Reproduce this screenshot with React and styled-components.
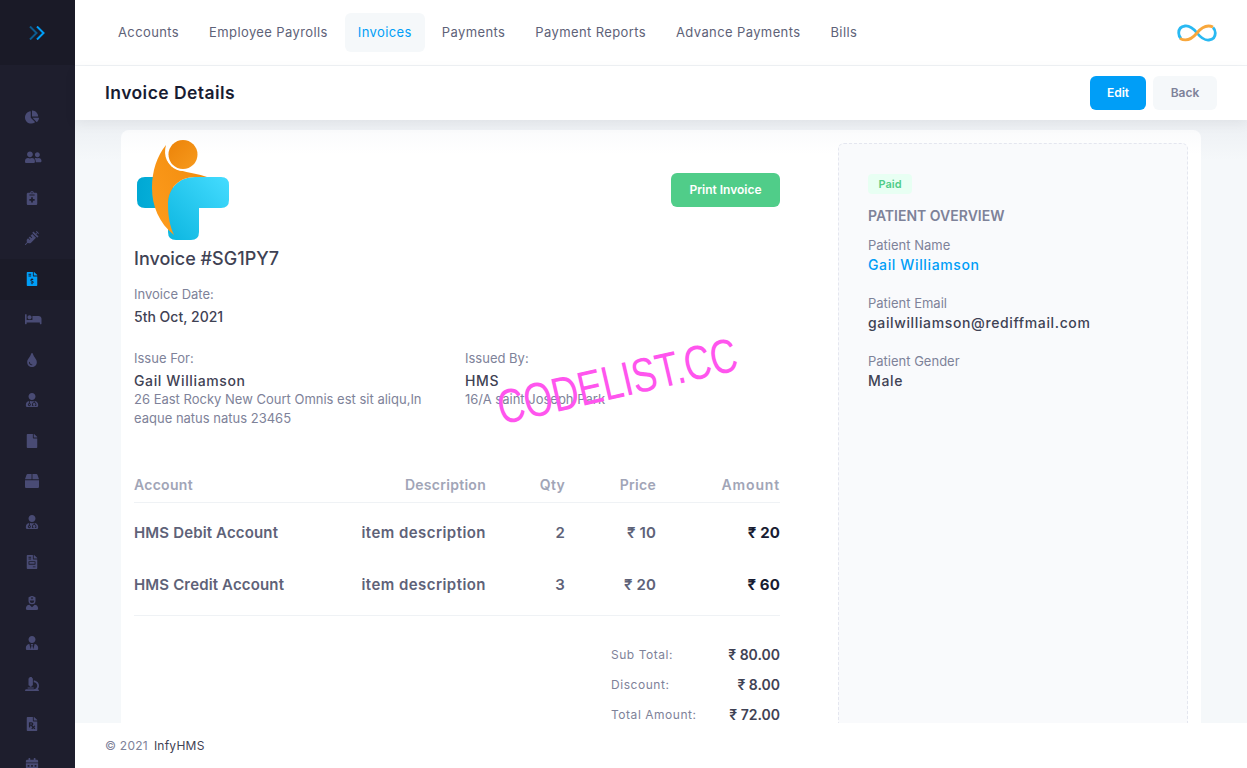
import React from "react";
import styled, { createGlobalStyle } from "styled-components";
import {
  FaChartPie,
  FaUserFriends,
  FaNotesMedical,
  FaSyringe,
  FaFileInvoiceDollar,
  FaBed,
  FaTint,
  FaUserMd,
  FaFile,
  FaBox,
  FaFileInvoice,
  FaUserNurse,
  FaUserTie,
  FaMicroscope,
  FaFilePrescription,
  FaCalendarAlt,
} from "react-icons/fa";

const navLinks = [
  "Accounts",
  "Employee Payrolls",
  "Invoices",
  "Payments",
  "Payment Reports",
  "Advance Payments",
  "Bills",
];

const sideIcons = [
  { Icon: FaChartPie },
  { Icon: FaUserFriends, wide: true },
  { Icon: FaNotesMedical },
  { Icon: FaSyringe },
  { Icon: FaFileInvoiceDollar },
  { Icon: FaBed, wide: true },
  { Icon: FaTint },
  { Icon: FaUserMd },
  { Icon: FaFile },
  { Icon: FaBox },
  { Icon: FaUserMd },
  { Icon: FaFileInvoice },
  { Icon: FaUserNurse },
  { Icon: FaUserTie },
  { Icon: FaMicroscope },
  { Icon: FaFilePrescription },
  { Icon: FaCalendarAlt },
];

const items = [
  { account: "HMS Debit Account", qty: 2, price: 10, amount: 20 },
  { account: "HMS Credit Account", qty: 3, price: 20, amount: 60 },
];

const Chevrons = () => (
  <svg width="16" height="14" viewBox="0 0 16 14" fill="none" strokeWidth="2">
    <path d="M1 0.500L7.500 7L1 13.500" stroke="#009ef7" opacity="0.5" />
    <path d="M8 0.500L14.500 7L8 13.500" stroke="#009ef7" />
  </svg>
);

const HospitalLogo = () => (
  <svg width="92" height="100" viewBox="0 0 92 100">
    <defs>
      <linearGradient id="bar" x1="0" x2="1" y1="0" y2="0">
        <stop offset="0" stopColor="#00a8d4" />
        <stop offset="1" stopColor="#0bb4dc" />
      </linearGradient>
      <linearGradient id="cross" x1="0" x2="1" y1="1" y2="0">
        <stop offset="0" stopColor="#0cb6e0" />
        <stop offset="1" stopColor="#45dcff" />
      </linearGradient>
      <linearGradient id="body" x1="0" x2="1" y1="1" y2="0">
        <stop offset="0" stopColor="#ff9d1e" />
        <stop offset="1" stopColor="#ef8a0c" />
      </linearGradient>
      <linearGradient id="head" x1="0" x2="1" y1="0" y2="1">
        <stop offset="0" stopColor="#ec8308" />
        <stop offset="1" stopColor="#f79a1e" />
      </linearGradient>
    </defs>
    <path d="M8 37H36V68H8Q0 68 0 60V45Q0 37 8 37Z" fill="url(#bar)" />
    <path
      d="M31 92V65C31 48 42 37 58 37H84Q92 37 92 45V60Q92 68 84 68H62V92Q62 100 54 100H39Q31 100 31 92Z"
      fill="url(#cross)"
    />
    <path
      d="M29 5C26 16 30 26 42 30C52 33 62 34 70 37H58C42 37 31 48 31 65C31 76 33 87 37 95C22 83 15 66 15 48C15 31 20 16 29 5Z"
      fill="url(#body)"
    />
    <circle cx="46" cy="14.500" r="16.500" fill="#fff" />
    <circle cx="46" cy="14.500" r="14.500" fill="url(#head)" />
  </svg>
);

const InfinityLogo = () => (
  <svg width="40" height="20" viewBox="0 0 40 20" fill="none" strokeWidth="2.800">
    <path
      d="M20 10C16 5 12 2.500 8 3C4 3.500 1.700 6 1.700 10C1.700 12 2.500 14 4 15.500"
      stroke="#29b9f2"
    />
    <path
      d="M20 10C24 15 28 17.500 32 17C36 16.500 38.300 14 38.300 10C38.300 8 37.500 6 36 4.500"
      stroke="#29b9f2"
    />
    <path
      d="M3 15.500C10 19 15 16 20 10C24 5 29 1 36 4"
      stroke="#f8a73c"
    />
  </svg>
);

const App = () => {
  return (
    <>
      <GlobalStyle />
      <Page>
        <Sidebar>
          <Brand>
            <Chevrons />
          </Brand>
          <SideMenu>
            {sideIcons.map(({ Icon, wide }, i) => (
              <SideItem key={i} $active={i === 4} $wide={wide}>
                <Icon />
              </SideItem>
            ))}
          </SideMenu>
        </Sidebar>
        <Main>
          <TopBar>
            <Nav>
              {navLinks.map((link) => (
                <NavLink key={link} $active={link === "Invoices"}>
                  {link}
                </NavLink>
              ))}
            </Nav>
            <InfinityLogo />
          </TopBar>
          <SubHeader>
            <PageTitle>Invoice Details</PageTitle>
            <Actions>
              <EditButton>Edit</EditButton>
              <BackButton>Back</BackButton>
            </Actions>
          </SubHeader>
          <Content>
            <Card>
              <Invoice>
                <InvoiceTop>
                  <HospitalLogo />
                  <PrintButton>Print Invoice</PrintButton>
                </InvoiceTop>
                <InvoiceNo>Invoice #SG1PY7</InvoiceNo>
                <Label>Invoice Date:</Label>
                <DateValue>5th Oct, 2021</DateValue>
                <Parties>
                  <div>
                    <Label>Issue For:</Label>
                    <PartyName>Gail Williamson</PartyName>
                    <Address>
                      26 East Rocky New Court Omnis est sit aliqu,In eaque natus
                      natus 23465
                    </Address>
                  </div>
                  <div>
                    <Label>Issued By:</Label>
                    <PartyName>HMS</PartyName>
                    <Address>16/A saint Joseph Park</Address>
                  </div>
                </Parties>
                <ItemsHead>
                  <span>Account</span>
                  <Right>Description</Right>
                  <Right>Qty</Right>
                  <Right>Price</Right>
                  <HeadAmount>Amount</HeadAmount>
                </ItemsHead>
                <ItemsBody>
                  {items.map((item) => (
                    <ItemRow key={item.account}>
                      <span>{item.account}</span>
                      <ItemDescription>item description</ItemDescription>
                      <Right>{item.qty}</Right>
                      <Right>₹ {item.price}</Right>
                      <Amount>₹ {item.amount}</Amount>
                    </ItemRow>
                  ))}
                </ItemsBody>
                <Totals>
                  <TotalRow>
                    <TotalLabel>Sub Total:</TotalLabel>
                    <TotalValue>₹ 80.00</TotalValue>
                  </TotalRow>
                  <TotalRow>
                    <TotalLabel>Discount:</TotalLabel>
                    <TotalValue>₹ 8.00</TotalValue>
                  </TotalRow>
                  <TotalRow>
                    <TotalLabel>Total Amount:</TotalLabel>
                    <TotalValue>₹ 72.00</TotalValue>
                  </TotalRow>
                </Totals>
              </Invoice>
              <Overview>
                <PaidBadge>Paid</PaidBadge>
                <OverviewTitle>PATIENT OVERVIEW</OverviewTitle>
                <Field>
                  <Label>Patient Name</Label>
                  <PatientLink>Gail Williamson</PatientLink>
                </Field>
                <Field>
                  <Label>Patient Email</Label>
                  <FieldValue>gailwilliamson@rediffmail.com</FieldValue>
                </Field>
                <Field>
                  <Label>Patient Gender</Label>
                  <FieldValue>Male</FieldValue>
                </Field>
              </Overview>
            </Card>
          </Content>
          <Footer>
            <span>© 2021</span>
            <FooterBrand>InfyHMS</FooterBrand>
          </Footer>
        </Main>
        <Watermark>CODELIST.CC</Watermark>
      </Page>
    </>
  );
};

export default App;

const GlobalStyle = createGlobalStyle`
  html, body {
    margin: 0;
    height: 100%;
    overflow: hidden;
    font-family: Inter, "Noto Sans", sans-serif;
  }
  * {
    box-sizing: border-box;
  }
`;

const Page = styled.div`
  position: relative;
  display: flex;
  height: 100vh;
  overflow: hidden;
`;

const Sidebar = styled.aside`
  width: 75px;
  flex-shrink: 0;
  background: #1e1e2d;
  overflow: hidden;
`;

const Brand = styled.div`
  height: 65px;
  display: flex;
  align-items: center;
  justify-content: center;
  padding-right: 2px;
  background: #1a1a27;
`;

const SideMenu = styled.nav`
  padding-top: 32px;
`;

const SideItem = styled.div`
  height: 40.5px;
  display: flex;
  align-items: center;
  padding-left: 25px;
  padding-bottom: 1px;
  font-size: ${(p) => (p.$wide ? "16.500px" : "14px")};
  color: ${(p) => (p.$active ? "#009ef7" : "#494b74")};
  background: ${(p) => (p.$active ? "#1b1b28" : "transparent")};
`;

const Main = styled.div`
  flex: 1;
  min-width: 0;
  display: flex;
  flex-direction: column;
`;

const TopBar = styled.header`
  height: 66px;
  flex-shrink: 0;
  display: flex;
  align-items: center;
  justify-content: space-between;
  padding: 0 30px;
  background: #fff;
  border-bottom: 1px solid #eff2f5;
`;

const Nav = styled.nav`
  display: flex;
  gap: 4px;
`;

const NavLink = styled.a`
  padding: 0 13px 2px;
  height: 39px;
  display: flex;
  align-items: center;
  border-radius: 6px;
  font-size: 13px;
  letter-spacing: 0.03em;
  color: ${(p) => (p.$active ? "#009ef7" : "#5e6278")};
  background: ${(p) => (p.$active ? "#f5f8fa" : "transparent")};
`;

const SubHeader = styled.div`
  position: relative;
  height: 54px;
  flex-shrink: 0;
  display: flex;
  align-items: center;
  justify-content: space-between;
  padding: 0 30px;
  background: #fff;
  box-shadow: 0 4px 12px rgba(0, 0, 0, 0.05);
`;

const PageTitle = styled.h1`
  margin: 0 0 2px;
  font-size: 17.500px;
  font-weight: 600;
  letter-spacing: 0.025em;
  color: #181c32;
`;

const Actions = styled.div`
  display: flex;
  gap: 7px;
`;

const EditButton = styled.button`
  width: 56px;
  height: 34px;
  padding: 0 0 2px;
  border: 0;
  border-radius: 6px;
  font: 600 12px Inter, sans-serif;
  color: #fff;
  background: #009ef7;
`;

const BackButton = styled(EditButton)`
  width: 64px;
  color: #7e8299;
  background: #f5f8fa;
`;

const Content = styled.main`
  flex: 1;
  min-height: 0;
  overflow: hidden;
  padding: 10px 46px 0;
  background: linear-gradient(#eceff3, #f5f8fa 40px);
`;

const Card = styled.section`
  display: flex;
  justify-content: space-between;
  padding: 13px 13px 0;
  border-radius: 8px 8px 0 0;
  background: linear-gradient(#fafbfc, #fff 24px);
  height: 720px;
`;

const Invoice = styled.div`
  width: 646px;
  margin-top: -3px;
`;

const InvoiceTop = styled.div`
  display: flex;
  align-items: center;
  justify-content: space-between;
  padding-left: 3px;
`;

const PrintButton = styled.button`
  width: 109px;
  height: 34px;
  padding: 0 0 2px;
  border: 0;
  border-radius: 6px;
  font: 600 12px Inter, sans-serif;
  color: #fff;
  background: #50cd89;
`;

const InvoiceNo = styled.h2`
  margin: 7px 0 13px;
  font-size: 18px;
  line-height: 24px;
  font-weight: 500;
  color: #3f4254;
`;

const Label = styled.div`
  font-size: 13px;
  line-height: 20px;
  color: #7e8299;
`;

const DateValue = styled.div`
  margin-top: 3px;
  font-size: 14px;
  line-height: 20px;
  font-weight: 500;
  color: #3f4254;
`;

const Parties = styled.div`
  display: grid;
  grid-template-columns: 331px 1fr;
  margin-top: 21px;
`;

const PartyName = styled(DateValue)`
  letter-spacing: 0.045em;
`;

const Address = styled.div`
  width: 300px;
  margin-top: -1px;
  font-size: 13px;
  line-height: 19px;
  color: #7e8299;
`;

const Columns = styled.div`
  display: grid;
  grid-template-columns: 190px 162px 79px 91px 124px;
  align-items: center;
`;

const ItemsHead = styled(Columns)`
  margin-top: 40px;
  height: 35px;
  padding-bottom: 2px;
  border-bottom: 1px solid #eff2f5;
  font-size: 14px;
  font-weight: 600;
  letter-spacing: 0.02em;
  color: #a1a5b7;
`;

const ItemsBody = styled.div`
  padding: 4px 0 4px;
  border-bottom: 1px solid #eff2f5;
`;

const ItemRow = styled(Columns)`
  height: 52px;
  padding-bottom: 2px;
  font-size: 15px;
  font-weight: 600;
  letter-spacing: 0.01em;
  color: #5e6278;
`;

const Right = styled.span`
  text-align: right;
`;

const HeadAmount = styled(Right)`
  letter-spacing: 0.06em;
`;

const ItemDescription = styled(Right)`
  letter-spacing: 0.03em;
`;

const Amount = styled(Right)`
  font-weight: 700;
  color: #181c32;
`;

const Totals = styled.div`
  margin: 23px 0 0 auto;
  width: 169px;
`;

const TotalRow = styled.div`
  height: 30px;
  display: flex;
  align-items: center;
  justify-content: space-between;
`;

const TotalLabel = styled.span`
  font-size: 12px;
  letter-spacing: 0.045em;
  color: #7e8299;
`;

const TotalValue = styled.span`
  font-size: 14px;
  font-weight: 600;
  color: #3f4254;
`;

const Overview = styled.aside`
  width: 350px;
  height: 640px;
  padding: 30px 29px 0;
  border: 1px dashed #e4e6ef;
  border-radius: 6px;
  background: #f9fafc;
`;

const PaidBadge = styled.div`
  width: 44px;
  height: 20px;
  border-radius: 4px;
  text-align: center;
  font-size: 11px;
  font-weight: 600;
  line-height: 20px;
  color: #50cd89;
  background: #e8fff3;
`;

const OverviewTitle = styled.h3`
  margin: 9px 0 6px;
  font-size: 14px;
  line-height: 26px;
  font-weight: 600;
  color: #7e8299;
`;

const Field = styled.div`
  margin-bottom: 18px;
`;

const FieldValue = styled.div`
  font-size: 14px;
  line-height: 20px;
  font-weight: 500;
  letter-spacing: 0.045em;
  color: #3f4254;
`;

const PatientLink = styled(FieldValue)`
  color: #009ef7;
`;

const Footer = styled.footer`
  height: 45px;
  flex-shrink: 0;
  display: flex;
  align-items: center;
  gap: 6px;
  padding: 0 30px;
  background: #fff;
  font-size: 12px;
  letter-spacing: 0.02em;
  color: #7e8299;
`;

const FooterBrand = styled.span`
  color: #3f4254;
`;

const Watermark = styled.div`
  position: absolute;
  left: 495px;
  top: 361px;
  font-family: "Liberation Sans", sans-serif;
  font-size: 37px;
  white-space: nowrap;
  color: #ff55ee;
  transform: rotate(-13deg) scaleY(1.300);
`;
